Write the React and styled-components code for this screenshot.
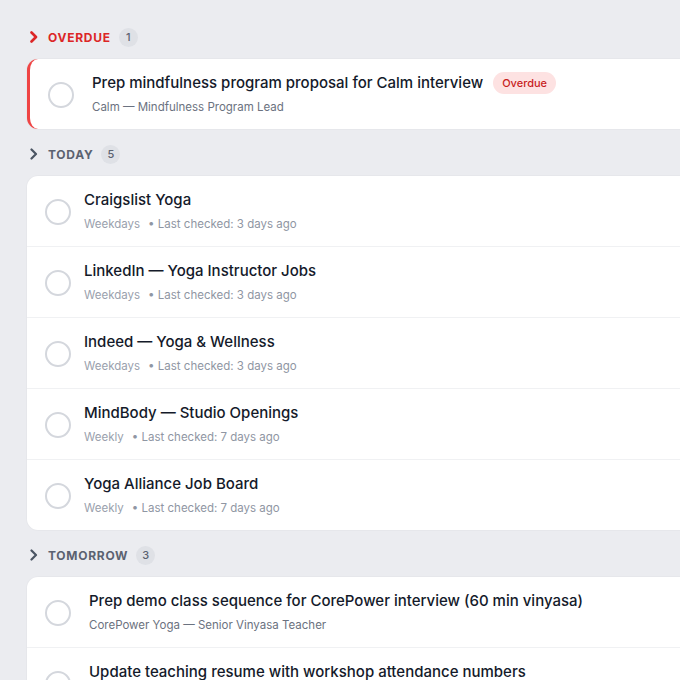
import React from "react";
import styled, { createGlobalStyle } from "styled-components";

const Global = createGlobalStyle`
  html, body { margin: 0; padding: 0; overflow: hidden; background: #ebecf0; }
  body { font-family: Inter, "Noto Sans", Arial, sans-serif; -webkit-font-smoothing: antialiased; }
  * { box-sizing: border-box; }
`;

const Page = styled.div`
  width: 800px;
  padding: 27px 0 0 27px;
  display: flex;
  flex-direction: column;
  gap: 15px;
`;

const Section = styled.section`
  display: flex;
  flex-direction: column;
  gap: 12px;
`;

const Header = styled.div`
  display: flex;
  align-items: center;
  height: 20px;
  padding-left: 2px;
`;

const Chevron = styled.svg`
  width: 10px;
  height: 12px;
  margin-right: 9px;
  color: ${(p) => (p.$danger ? "#dc2626" : "#4b5563")};
`;

const Label = styled.span`
  font-size: 12px;
  font-weight: 700;
  letter-spacing: 0.06em;
  text-transform: uppercase;
  color: ${(p) => (p.$danger ? "#dc2626" : "#5b6270")};
`;

const Count = styled.span`
  margin-left: 8px;
  min-width: 19px;
  height: 19px;
  padding: 0 5px;
  border-radius: 10px;
  background: #dfe1e6;
  color: #5b6270;
  font-size: 11px;
  font-weight: 500;
  display: inline-flex;
  align-items: center;
  justify-content: center;
`;

const Card = styled.div`
  background: #fff;
  border-radius: 11px;
  overflow: hidden;
  border-left: ${(p) => (p.$danger ? "3px solid #ef4444" : "none")};
  box-shadow: 0 0 0 1px rgba(0, 0, 0, 0.02);
`;

const Row = styled.div`
  display: flex;
  align-items: center;
  padding: 15px 18px 14px;
  gap: ${(p) => (p.$wide ? "18px" : "13px")};
  border-bottom: 1px solid #f0f1f3;
  &:last-child { border-bottom: none; }
`;

const Check = styled.span`
  flex: none;
  width: 26px;
  height: 26px;
  border-radius: 50%;
  border: 2px solid #d4d7dd;
`;

const Body = styled.div`
  display: flex;
  flex-direction: column;
  gap: 7px;
  min-width: 0;
`;

const TitleLine = styled.div`
  display: flex;
  align-items: center;
  gap: 10px;
  height: 18px;
`;

const Title = styled.span`
  font-size: 15px;
  line-height: 18px;
  font-weight: 500;
  color: #141a2a;
  white-space: nowrap;
`;

const Pill = styled.span`
  height: 22px;
  padding: 0 9px;
  border-radius: 11px;
  background: #fde2e2;
  color: #c81e1e;
  font-size: 11px;
  font-weight: 500;
  display: inline-flex;
  align-items: center;
`;

const Sub = styled.div`
  font-size: 11.5px;
  line-height: 16px;
  color: ${(p) => (p.$light ? "#9aa1ad" : "#6b7280")};
  white-space: nowrap;
`;

const Meta = styled.span`
  margin-left: 8px;
  color: #8f96a3;
`;

const ChevronIcon = ({ danger }) => (
  <Chevron $danger={danger} viewBox="0 0 10 12" fill="none">
    <path
      d="M2.5 1.5 L7 6 L2.5 10.5"
      stroke="currentColor"
      strokeWidth={danger ? 2.6 : 2.2}
      strokeLinecap="round"
      strokeLinejoin="round"
    />
  </Chevron>
);

const SectionHeader = ({ label, count, danger }) => (
  <Header>
    <ChevronIcon danger={danger} />
    <Label $danger={danger}>{label}</Label>
    <Count>{count}</Count>
  </Header>
);

const boards = [
  ["Craigslist Yoga", "Weekdays", "3 days ago"],
  ["LinkedIn — Yoga Instructor Jobs", "Weekdays", "3 days ago"],
  ["Indeed — Yoga & Wellness", "Weekdays", "3 days ago"],
  ["MindBody — Studio Openings", "Weekly", "7 days ago"],
  ["Yoga Alliance Job Board", "Weekly", "7 days ago"],
];

const tomorrow = [
  ["Prep demo class sequence for CorePower interview (60 min vinyasa)", "CorePower Yoga — Senior Vinyasa Teacher"],
  ["Update teaching resume with workshop attendance numbers", "Personal"],
  ["Follow up with YogaWorks studio manager", "YogaWorks — Lead Instructor"],
];

export default function App() {
  return (
    <>
      <Global />
      <Page>
        <Section>
          <SectionHeader label="Overdue" count={1} danger />
          <Card $danger>
            <Row $wide>
              <Check />
              <Body>
                <TitleLine>
                  <Title>Prep mindfulness program proposal for Calm interview</Title>
                  <Pill>Overdue</Pill>
                </TitleLine>
                <Sub>Calm — Mindfulness Program Lead</Sub>
              </Body>
            </Row>
          </Card>
        </Section>

        <Section>
          <SectionHeader label="Today" count={5} />
          <Card>
            {boards.map(([name, freq, ago]) => (
              <Row key={name}>
                <Check />
                <Body>
                  <TitleLine>
                    <Title>{name}</Title>
                  </TitleLine>
                  <Sub $light>
                    {freq}
                    <Meta>• Last checked: {ago}</Meta>
                  </Sub>
                </Body>
              </Row>
            ))}
          </Card>
        </Section>

        <Section>
          <SectionHeader label="Tomorrow" count={3} />
          <Card>
            {tomorrow.map(([t, s]) => (
              <Row $wide key={t}>
                <Check />
                <Body>
                  <TitleLine>
                    <Title>{t}</Title>
                  </TitleLine>
                  <Sub>{s}</Sub>
                </Body>
              </Row>
            ))}
          </Card>
        </Section>
      </Page>
    </>
  );
}
